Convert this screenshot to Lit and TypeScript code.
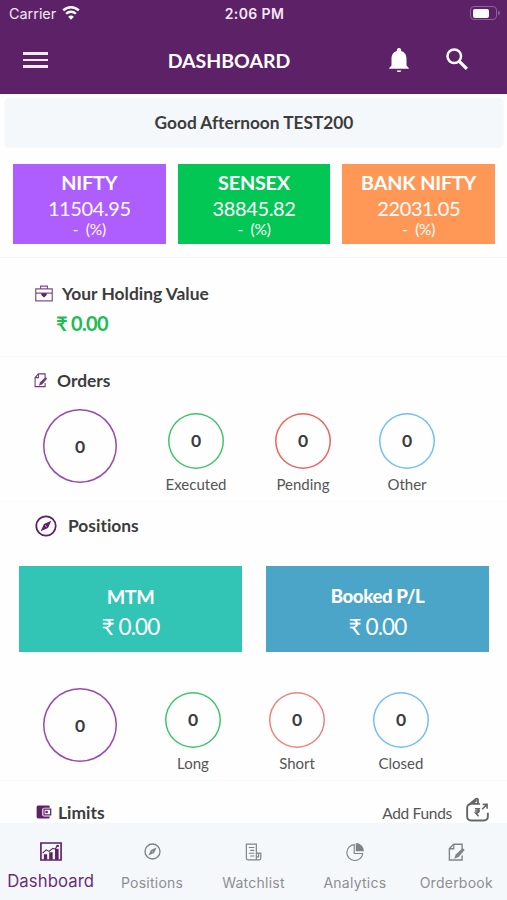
import { LitElement, html, css, svg, nothing } from "lit";
import { customElement, property } from "lit/decorators.js";

const compass = svg`
  <circle cx="12" cy="12" r="10.6" fill="none" stroke="currentColor" stroke-width="1.9"/>
  <path d="M17.8 6.2 14.2 14.2 6.2 17.8 9.8 9.8Z" fill="currentColor"/>
  <path d="m10.9 11.3 1.8 1.7" stroke="var(--hole, #fff)" stroke-width="0.9"/>`;

const note = svg`
  <path d="M20.5 8V1.5H8.2L2 7.4V22.5h18.5v-6" fill="none" stroke="currentColor" stroke-width="2"/>
  <path d="M2 7.6h6.4V1.5" fill="none" stroke="currentColor" stroke-width="1.8"/>
  <path d="M21.3 6.8 24.2 9.4 15.4 18.6 9 21 11.2 15.4Z" fill="currentColor"/>`;

const icons: Record<string, unknown> = {
  compass,
  note,
  wifi: svg`
    <path d="M1.6 8.4a15 15 0 0 1 20.8 0" fill="none" stroke="currentColor" stroke-width="3.4"/>
    <path d="M5.5 13a9.4 9.4 0 0 1 13 0" fill="none" stroke="currentColor" stroke-width="3.2"/>
    <path d="m12 21-3.8-3.9a5.4 5.4 0 0 1 7.6 0Z" fill="currentColor"/>`,
  bell: svg`<path d="M12 24c1.2 0 2.1-.6 2.3-1.6H9.7C9.9 23.4 10.8 24 12 24Zm9.8-3.2v-.9l-2.3-2.3V10.5c0-3.8-2-6.7-5.4-7.6v-.8C14.1.9 13.2 0 12 0S9.9.9 9.9 2.1v.8c-3.4.9-5.4 3.8-5.4 7.6v7.1l-2.3 2.3v.9Z" fill="currentColor"/>`,
  search: svg`
    <circle cx="9" cy="9" r="7.4" fill="none" stroke="currentColor" stroke-width="2.7"/>
    <path d="m14.2 14.2 8.6 8.6" stroke="currentColor" stroke-width="3.5"/>`,
  briefcase: svg`
    <path d="M1 5.5h22v17H1zM7.5 5V1.5h9V5M1 11.5h22" fill="none" stroke="currentColor" stroke-width="1.6"/>
    <path d="M8.4 11.5h7.2v2.6L12 17.6l-3.6-3.5Z" fill="#5c2166"/>`,
  wallet: svg`
    <path d="M3.5 1h16.5q2 0 2 2v1.5H13q-3 0-3 3v9q0 3 3 3h9V21q0 2-2 2H3.5Q1 23 1 20.5v-17Q1 1 3.5 1Z" fill="currentColor"/>
    <path d="M12.8 7h10.7v10H12.8z" fill="none" stroke="currentColor" stroke-width="2"/>
    <circle cx="17" cy="12" r="2.1" fill="currentColor"/>`,
  chart: svg`
    <path d="M1 1.2h22v21.6H1z" fill="none" stroke="currentColor" stroke-width="1.8"/>
    <path d="M4.2 15.5h3.6v7H4.2zM10 13h3.8v9.5H10zM16.4 8.5h3.9v14h-3.9z" fill="currentColor"/>
    <path d="m2.8 14 4-4 3 1.8 4.200-3.800 2.400 1 3-4.500" fill="none" stroke="currentColor" stroke-width="1.2"/>
    <circle cx="19.2" cy="4.9" r="1.5" fill="currentColor"/>`,
  list: svg`
    <path d="M2 1.5h14.5v21H4.5Q2 22.5 2 20ZM16.5 13.5H23V20Q23 22.5 20.5 22.5H4.5M19.8 13.5v5h-3.3" fill="none" stroke="currentColor" stroke-width="1.7"/>
    <path d="M5.5 6h8M7.5 9.8h6M5.5 13.6h8M7.5 17.4h6" stroke="currentColor" stroke-width="1.5"/>`,
  pie: svg`
    <path d="M11 2.2A10.6 10.6 0 1 0 22.3 14H11Z" fill="none" stroke="currentColor" stroke-width="1.5"/>
    <path d="M13.1 0A11 11 0 0 1 24 11H13.1Z" fill="currentColor"/>`,
  funds: svg`
    <path d="M14.5 6H5.5Q1.2 6.3 1.2 10v9q0 3.9 4.3 3.9h13q4.3 0 4.3-3.9v-4" fill="none" stroke="currentColor" stroke-width="2"/>
    <path d="M2.3 7.500 10.500.9q1.200-.7 2 .6v4.300M7 5.600l4-3.300" fill="none" stroke="currentColor" stroke-width="1.9"/>
    <path d="M9.300 11h5.400M9.300 13.200h5.400M10 11c4.500 0 4.500 4.400 0 4.400l3.200 3.300" fill="none" stroke="currentColor" stroke-width="1.6"/>
    <path d="M16.800 11.500 22 6.500M17.500 6.500H22V11" fill="none" stroke="currentColor" stroke-width="1.7"/>`,
};

@customElement("ui-icon")
class UiIcon extends LitElement {
  @property() name = "";
  static styles = css`
    :host { display: block; width: 20px; height: 20px; flex: none; }
    svg { display: block; width: 100%; height: 100%; overflow: visible; }
  `;
  render() {
    return html`<svg viewBox="0 0 24 24" preserveAspectRatio="none">${icons[this.name]}</svg>`;
  }
}

@customElement("count-ring")
class CountRing extends LitElement {
  @property() tone = "purple";
  @property() label = "";
  @property({ type: Number }) value = 0;
  static styles = css`
    :host { display: flex; flex-direction: column; align-items: center; width: 80px; }
    .ring {
      width: 56px; height: 56px; border-radius: 50%;
      box-shadow: inset 0 0 0 1.5px currentColor; display: grid; place-items: center;
      font-weight: 700; font-size: 17.5px; line-height: 20px;
    }
    .ring span { color: #3c3c3c; }
    .purple { width: 74px; height: 74px; color: #9a48b0; }
    .purple span { margin-top: 1px; }
    .green { color: #3fc56d; }
    .red { color: #f0605c; }
    .rose { color: #f37f80; }
    .blue { color: #6fc0f5; }
    .label { margin-top: 6px; font-size: 15px; line-height: 18px; color: #555; }
  `;
  render() {
    return html`<div class="ring ${this.tone}"><span>${this.value}</span></div>
      ${this.label ? html`<div class="label">${this.label}</div>` : nothing}`;
  }
}

@customElement("app-root")
class AppRoot extends LitElement {
  static styles = css`
    :host {
      display: flex; flex-direction: column; width: 507px; height: 900px; overflow: hidden;
      background: #fefefe; color: #3c3c3c; font-family: Lato, "Noto Sans", sans-serif;
      font-variant-ligatures: none;
    }
    header { flex: none; height: 94px; background: #5c2166; color: #fff; }
    .status {
      display: grid; grid-template-columns: 1fr auto 1fr; align-items: center; height: 28px;
      padding: 0 7px 0 9px; font: 14.4px/20px Inter, sans-serif; color: #f4e9f6;
    }
    .carrier { display: flex; align-items: center; gap: 6px; }
    .wifi { width: 18px; height: 18px; margin-top: -3px; color: #fff; }
    .time { font-weight: 600; font-size: 14px; letter-spacing: 0.4px; }
    .battery { justify-self: end; display: flex; align-items: center; gap: 1px; margin-top: -2px; }
    .cell { box-sizing: border-box; width: 27px; height: 14px; padding: 1.5px; border: 1px solid #8f619a; border-radius: 4px; }
    .level { width: 16px; height: 9px; border-radius: 2px; background: #fff; }
    .cap { width: 2px; height: 4px; border-radius: 0 2px 2px 0; background: #8f619a; }
    .bar { display: grid; grid-template-columns: 145px 168px 1fr; align-items: center; height: 64px; }
    .menu { display: grid; gap: 4px; width: 25px; margin-left: 22.5px; }
    .menu i { height: 2.7px; background: #f3eaf5; }
    h1 { margin: 0; padding-top: 2px; font-size: 19.5px; line-height: 24px; font-weight: 700; text-align: center; }
    .tools { display: flex; align-items: center; gap: 35px; margin-left: 74px; }
    .bell { width: 24px; height: 24px; }
    .search { width: 22px; height: 22px; margin-top: -2px; }
    .greeting {
      flex: none; box-sizing: border-box; height: 50px; margin: 4px 3px 0 4px; border-radius: 5px; background: #f4f8fa;
      border: 1px solid #f7f9fa; font-size: 17.3px; line-height: 47px; font-weight: 700; text-align: center;
    }
    .indices { flex: none; box-sizing: border-box; height: 110px; padding: 15.5px 12px 0 13px; display: grid; grid-template-columns: repeat(3, 1fr); gap: 12px; border-bottom: 1.5px solid #f4f5f5; }
    .index { height: 80.5px; box-sizing: border-box; padding-top: 6px; color: #fff; text-align: center; }
    .violet { background: #ae5dff; }
    .emerald { background: #03c755; }
    .orange { background: #ff9857; }
    .index b { display: block; font-size: 19.8px; line-height: 24px; letter-spacing: -0.2px; }
    .index span { display: block; font-size: 20px; line-height: 29px; letter-spacing: -0.38px; }
    .index small { display: block; font-size: 15.5px; line-height: 13px; white-space: pre; letter-spacing: -0.2px; }
    section { flex: none; box-sizing: border-box; border-bottom: 1px solid #fafafa; }
    h2 { display: flex; align-items: center; margin: 0; font-size: 17.4px; line-height: 22px; font-weight: 700; color: #3c3c3c; }
    .purple { color: #5c2166; }
    .holding { height: 99px; padding: 25px 0 0 35px; }
    .holding ui-icon { width: 18px; height: 17px; margin: -2px 9px 0 0; color: #80508a; }
    .amount { margin: 6px 0 0 21px; font-size: 20px; line-height: 24px; font-weight: 700; color: #22bb54; letter-spacing: -0.7px; }
    .orders { height: 145px; padding: 13px 0 0 33px; }
    .orders h2 ui-icon { width: 13px; height: 14.5px; margin: -1px 10px 0 1px; color: #6f3a7a; }
    .rings { display: flex; align-items: flex-start; }
    .rings count-ring:not(:first-child) { margin-top: 4px; }
    .orders .rings { margin: 17px 0 0 7px; }
    .orders count-ring:nth-child(2) { margin-left: 36px; }
    .orders count-ring:nth-child(3) { margin-left: 27px; }
    .orders count-ring:nth-child(4) { margin-left: 24px; }
    .positions { height: 279px; padding-top: 13px; }
    .positions h2 { margin-left: 35px; }
    .positions h2 ui-icon { width: 22px; height: 22px; margin: -1px 11px 0 0; }
    .tiles { display: grid; grid-template-columns: 1fr 1fr; gap: 24px; margin: 29px 18px 0 19px; }
    .tile { box-sizing: border-box; height: 86px; padding-top: 18px; color: #fff; text-align: center; }
    .teal { background: #32c5b5; }
    .sky { background: #4aa5c9; }
    .tile b { display: block; font-size: 19.6px; line-height: 26px; letter-spacing: -0.4px; }
    .tile.sky b { font-weight: 900; font-size: 18.6px; line-height: 24px; padding-bottom: 2px; letter-spacing: -0.4px; }
    .tile span { display: block; font-size: 22.5px; line-height: 34px; letter-spacing: -0.9px; }
    .positions .rings { margin: 36px 0 0 40px; }
    .positions count-ring:nth-child(2) { margin-left: 33px; }
    .positions count-ring:nth-child(n + 3) { margin-left: 24px; }
    .limits { height: 42px; padding: 21px 18px 0 36px; display: flex; align-items: center; justify-content: space-between; border: 0; }
    .limits h2 ui-icon { width: 15px; height: 14px; margin: -1px 7px 0 0; }
    .add { display: flex; align-items: center; gap: 14px; height: 20px; font-size: 15.5px; line-height: 20px; letter-spacing: -0.3px; color: #555; }
    .add ui-icon { width: 23px; height: 23.5px; margin-top: -5px; color: #666; }
    nav { --hole: #f4f8fb; flex: 1; display: grid; grid-template-columns: repeat(5, 1fr); background: #f4f8fb; font-family: Inter, sans-serif; color: #8c8f92; }
    .tab { display: flex; flex-direction: column; align-items: center; padding-top: 20px; font-size: 14px; line-height: 18px; letter-spacing: 0.25px; white-space: nowrap; }
    .tab ui-icon { width: 16.5px; height: 18px; margin-bottom: 13px; color: #808386; }
    .tab ui-icon.compass { width: 17px; height: 17px; margin-bottom: 14px; }
    .tab ui-icon.pie { width: 18px; }
    .tab.active { color: #6a2c79; font-size: 16.7px; letter-spacing: 0.1px; }
    .tab.active ui-icon { width: 22px; height: 19px; margin: -1px 0 11px; color: #5c2166; }
  `;
  render() {
    const indices = [
      ["violet", "NIFTY", "11504.95"],
      ["emerald", "SENSEX", "38845.82"],
      ["orange", "BANK NIFTY", "22031.05"],
    ];
    const tabs = [
      ["chart", "Dashboard"],
      ["compass", "Positions"],
      ["list", "Watchlist"],
      ["pie", "Analytics"],
      ["note", "Orderbook"],
    ];
    return html`
      <header>
        <div class="status">
          <div class="carrier">Carrier<ui-icon class="wifi" name="wifi"></ui-icon></div>
          <div class="time">2:06 PM</div>
          <div class="battery"><div class="cell"><div class="level"></div></div><div class="cap"></div></div>
        </div>
        <div class="bar">
          <div class="menu"><i></i><i></i><i></i></div>
          <h1>DASHBOARD</h1>
          <div class="tools"><ui-icon class="bell" name="bell"></ui-icon><ui-icon class="search" name="search"></ui-icon></div>
        </div>
      </header>
      <div class="greeting">Good Afternoon TEST200</div>
      <div class="indices">
        ${indices.map(([tone, name, value]) => html`<div class="index ${tone}"><b>${name}</b><span>${value}</span><small>-  (%)</small></div>`)}
      </div>
      <section class="holding">
        <h2><ui-icon name="briefcase"></ui-icon>Your Holding Value</h2>
        <div class="amount">₹ 0.00</div>
      </section>
      <section class="orders">
        <h2><ui-icon name="note"></ui-icon>Orders</h2>
        <div class="rings">
          <count-ring></count-ring>
          <count-ring tone="green" label="Executed"></count-ring>
          <count-ring tone="red" label="Pending"></count-ring>
          <count-ring tone="blue" label="Other"></count-ring>
        </div>
      </section>
      <section class="positions">
        <h2><ui-icon class="purple" name="compass"></ui-icon>Positions</h2>
        <div class="tiles">
          <div class="tile teal"><b>MTM</b><span>₹ 0.00</span></div>
          <div class="tile sky"><b>Booked P/L</b><span>₹ 0.00</span></div>
        </div>
        <div class="rings">
          <count-ring></count-ring>
          <count-ring tone="green" label="Long"></count-ring>
          <count-ring tone="rose" label="Short"></count-ring>
          <count-ring tone="blue" label="Closed"></count-ring>
        </div>
      </section>
      <section class="limits">
        <h2><ui-icon class="purple" name="wallet"></ui-icon>Limits</h2>
        <div class="add">Add Funds<ui-icon name="funds"></ui-icon></div>
      </section>
      <nav>
        ${tabs.map(([icon, label], i) => html`<div class="tab ${i === 0 ? "active" : ""}"><ui-icon class=${icon} name=${icon}></ui-icon>${label}</div>`)}
      </nav>
    `;
  }
}
